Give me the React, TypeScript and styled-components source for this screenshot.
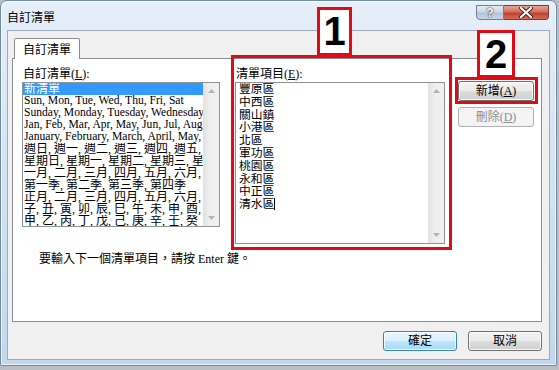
import styled, { createGlobalStyle } from 'styled-components';

const GlobalStyle = createGlobalStyle`
  html, body {
    margin: 0;
    padding: 0;
    background: #b9bec4;
  }
  * { box-sizing: border-box; }
`;

const leftItems = [
  { text: '新清單', selected: true },
  { text: 'Sun, Mon, Tue, Wed, Thu, Fri, Sat', latin: true },
  { text: 'Sunday, Monday, Tuesday, Wednesday, Thursday, Friday, Saturday', latin: true },
  { text: 'Jan, Feb, Mar, Apr, May, Jun, Jul, Aug, Sep, Oct, Nov, Dec', latin: true },
  { text: 'January, February, March, April, May, June, July, August', latin: true },
  { text: '週日, 週一, 週二, 週三, 週四, 週五, 週六' },
  { text: '星期日, 星期一, 星期二, 星期三, 星期四, 星期五, 星期六' },
  { text: '一月, 二月, 三月, 四月, 五月, 六月, 七月, 八月' },
  { text: '第一季, 第二季, 第三季, 第四季' },
  { text: '正月, 二月, 三月, 四月, 五月, 六月, 七月, 八月' },
  { text: '子, 丑, 寅, 卯, 辰, 巳, 午, 未, 申, 酉, 戌, 亥' },
  { text: '甲, 乙, 丙, 丁, 戊, 己, 庚, 辛, 壬, 癸' },
];

const entries = ['豐原區', '中西區', '關山鎮', '小港區', '北區', '軍功區', '桃園區', '永和區', '中正區', '清水區'];

const Stage = styled.div`
  position: relative;
  width: 559px;
  height: 370px;
  overflow: hidden;
`;

const Window = styled.div`
  width: 557px;
  height: 366px;
  display: flex;
  flex-direction: column;
  border: 1px solid #6f8aa6;
  border-radius: 7px 7px 2px 2px;
  background: linear-gradient(180deg, #e6eef8 0%, #d6e4f4 40%, #c2d7ee 100%);
  box-shadow: inset 0 0 0 1px rgba(255, 255, 255, 0.7);
`;

const TitleBar = styled.div`
  height: 29px;
  display: flex;
  justify-content: space-between;
  align-items: flex-start;
  padding-left: 6px;
  padding-right: 7px;
`;

const Title = styled.div`
  margin-top: 9px;
  font-family: 'Noto Sans CJK TC', sans-serif;
  font-size: 12px;
  line-height: 14px;
  color: #000;
`;

const Captions = styled.div`
  display: flex;
  margin-top: 4px;
`;

const CaptionButton = styled.div<{ $close?: boolean }>`
  width: ${(p) => (p.$close ? '45px' : '28px')};
  height: 15px;
  display: flex;
  align-items: center;
  justify-content: center;
  border: 1px solid ${(p) => (p.$close ? '#7a3a3a' : '#6d7f95')};
  border-radius: ${(p) => (p.$close ? '0 0 4px 0' : '0 0 0 4px')};
  border-left-width: ${(p) => (p.$close ? '0' : '1px')};
  background: ${(p) =>
    p.$close
      ? 'linear-gradient(180deg, #e8a493 0%, #d2705e 45%, #c0402e 55%, #d66a55 100%)'
      : 'linear-gradient(180deg, #e4ebf3 0%, #cbd7e5 45%, #b3c3d6 55%, #c7d5e6 100%)'};
  color: #fff;
  font-family: 'Liberation Sans', sans-serif;
  font-weight: bold;
  font-size: 12px;
  text-shadow: 0 0 2px #333, 0 0 1px #333;
`;

const Client = styled.div`
  flex: 1;
  margin: 0 6px 5px 6px;
  display: flex;
  flex-direction: column;
  background: #f0f0f0;
  border: 1px solid #9aabbf;
  font-family: 'Liberation Serif', 'Noto Sans CJK TC', serif;
  font-size: 12px;
  color: #000;
`;

const TabStrip = styled.div`
  display: flex;
  padding: 7px 0 0 6px;
  margin-bottom: -1px;
  position: relative;
  z-index: 1;
`;

const Tab = styled.div`
  width: 66px;
  height: 21px;
  background: #fff;
  border: 1px solid #898c95;
  border-bottom: none;
  border-radius: 2px 2px 0 0;
  font-family: 'Noto Sans CJK TC', sans-serif;
  font-size: 12px;
  line-height: 20px;
  padding-left: 8px;
`;

const Panel = styled.div`
  height: 264px;
  margin: 0 7px 0 4px;
  background: #fff;
  border: 1px solid #898c95;
  padding: 8px 0 0 9px;
  display: flex;
  flex-direction: column;
`;

const Row = styled.div`
  display: flex;
  align-items: flex-start;
`;

const Column = styled.div<{ $width: number; $gap: number }>`
  width: ${(p) => p.$width}px;
  margin-right: ${(p) => p.$gap}px;
  display: flex;
  flex-direction: column;
`;

const Label = styled.div`
  height: 15px;
  line-height: 14px;
  padding-left: 1px;
  white-space: nowrap;
`;

const ListBox = styled.div<{ $height: number }>`
  height: ${(p) => p.$height}px;
  display: flex;
  border: 1px solid #8f9296;
  background: #fff;
  overflow: hidden;
`;

const ListBody = styled.div<{ $pad: number }>`
  flex: 1;
  min-width: 0;
  overflow: hidden;
  padding: 0 0 0 ${(p) => p.$pad}px;
`;

const Item = styled.div<{ $latin?: boolean; $selected?: boolean }>`
  height: 12px;
  line-height: 12px;
  font-size: ${(p) => (p.$latin ? '11.6px' : '12px')};
  white-space: nowrap;
  overflow: hidden;
  padding-left: 1px;
  background: ${(p) => (p.$selected ? '#3399ff' : 'transparent')};
  color: ${(p) => (p.$selected ? '#fff' : '#000')};
`;

const Entry = styled.div`
  height: 12.8px;
  line-height: 12.8px;
  font-size: 11.8px;
  white-space: nowrap;
`;

const Caret = styled.span`
  display: inline-block;
  width: 1px;
  height: 12px;
  background: #000;
  vertical-align: -2px;
`;

const ScrollBar = styled.div`
  width: 16px;
  display: flex;
  flex-direction: column;
  justify-content: space-between;
  align-items: center;
  padding: 6px 0;
  background: linear-gradient(90deg, #e4e4e4 0%, #efefef 40%, #f0f0f0 100%);
  border-left: 1px solid #e2e2e2;
`;

const Buttons = styled.div`
  display: flex;
  flex-direction: column;
  gap: 6px;
  padding-top: 14px;
`;

const Button = styled.div<{ $width?: number; $disabled?: boolean; $default?: boolean }>`
  width: ${(p) => p.$width ?? 76}px;
  height: 20px;
  display: flex;
  align-items: center;
  justify-content: center;
  border-radius: 3px;
  border: 1px solid ${(p) => (p.$disabled ? '#adb2b5' : p.$default ? '#3c7fb1' : '#707070')};
  background: ${(p) =>
    p.$disabled
      ? '#f4f4f4'
      : p.$default
      ? 'linear-gradient(180deg, #eaf6fd 0%, #d9f0fc 50%, #bee6fd 51%, #a7d9f5 100%)'
      : 'linear-gradient(180deg, #f2f2f2 0%, #ebebeb 50%, #dddddd 51%, #cfcfcf 100%)'};
  box-shadow: ${(p) => (p.$disabled ? 'none' : 'inset 0 0 0 1px rgba(255,255,255,0.8)')};
  color: ${(p) => (p.$disabled ? '#8d8d8d' : '#000')};
  font-size: 12px;
  line-height: 14px;
  white-space: nowrap;
`;

const Hint = styled.div`
  margin: 8px 0 0 17px;
  line-height: 14px;
  font-size: 12px;
`;

const Footer = styled.div`
  display: flex;
  justify-content: flex-end;
  gap: 11px;
  padding: 9px 7px 0 0;
`;

const Marker = styled.div<{ $x: number; $y: number; $w: number; $h: number; $fill?: boolean }>`
  position: absolute;
  left: ${(p) => p.$x}px;
  top: ${(p) => p.$y}px;
  width: ${(p) => p.$w}px;
  height: ${(p) => p.$h}px;
  border: 3px solid #e10a17;
  background: ${(p) => (p.$fill ? '#fff' : 'transparent')};
  display: flex;
  align-items: center;
  justify-content: center;
  font-family: 'Liberation Sans', Arial, sans-serif;
  font-weight: bold;
  font-size: 40px;
  color: #000;
  z-index: 5;
`;

const Arrow = ({ down }: { down?: boolean }) => (
  <svg width="7" height="4" viewBox="0 0 7 4">
    <path d={down ? 'M0 0 L7 0 L3.5 4 Z' : 'M0 4 L7 4 L3.5 0 Z'} fill="#b3b3b3" />
  </svg>
);

const CloseIcon = () => (
  <svg width="14" height="11" viewBox="0 0 14 11">
    <path d="M2 1 L12 10 M12 1 L2 10" stroke="#3a2222" strokeWidth="4" strokeLinecap="round" />
    <path d="M2 1 L12 10 M12 1 L2 10" stroke="#fff" strokeWidth="2.2" strokeLinecap="round" />
  </svg>
);

const Key = ({ k }: { k: string }) => (
  <>
    (<u>{k}</u>)
  </>
);

export default function App() {
  return (
    <Stage>
      <GlobalStyle />
      <Window>
        <TitleBar>
          <Title>自訂清單</Title>
          <Captions>
            <CaptionButton>?</CaptionButton>
            <CaptionButton $close>
              <CloseIcon />
            </CaptionButton>
          </Captions>
        </TitleBar>
        <Client>
          <TabStrip>
            <Tab>自訂清單</Tab>
          </TabStrip>
          <Panel>
            <Row>
              <Column $width={198} $gap={15}>
                <Label>
                  自訂清單<Key k="L" />:
                </Label>
                <ListBox $height={145}>
                  <ListBody $pad={0}>
                    {leftItems.map((it) => (
                      <Item key={it.text} $latin={it.latin} $selected={it.selected}>
                        {it.text}
                      </Item>
                    ))}
                  </ListBody>
                  <ScrollBar>
                    <Arrow />
                    <Arrow down />
                  </ScrollBar>
                </ListBox>
              </Column>
              <Column $width={210} $gap={13}>
                <Label>
                  清單項目<Key k="E" />:
                </Label>
                <ListBox $height={162}>
                  <ListBody $pad={3}>
                    {entries.map((e, i) => (
                      <Entry key={e}>
                        {e}
                        {i === entries.length - 1 && <Caret />}
                      </Entry>
                    ))}
                  </ListBody>
                  <ScrollBar>
                    <Arrow />
                    <Arrow down />
                  </ScrollBar>
                </ListBox>
              </Column>
              <Buttons>
                <Button>
                  新增<Key k="A" />
                </Button>
                <Button $disabled>
                  刪除<Key k="D" />
                </Button>
              </Buttons>
            </Row>
            <Hint>要輸入下一個清單項目，請按 Enter 鍵。</Hint>
          </Panel>
          <Footer>
            <Button $width={74} $default>
              確定
            </Button>
            <Button $width={74}>取消</Button>
          </Footer>
        </Client>
      </Window>
      <Marker $x={231} $y={55} $w={221} $h={195} />
      <Marker $x={317} $y={7} $w={35} $h={49} $fill>
        1
      </Marker>
      <Marker $x={455} $y={77} $w={83} $h={27} />
      <Marker $x={477} $y={30} $w={38} $h={48} $fill>
        2
      </Marker>
    </Stage>
  );
}
